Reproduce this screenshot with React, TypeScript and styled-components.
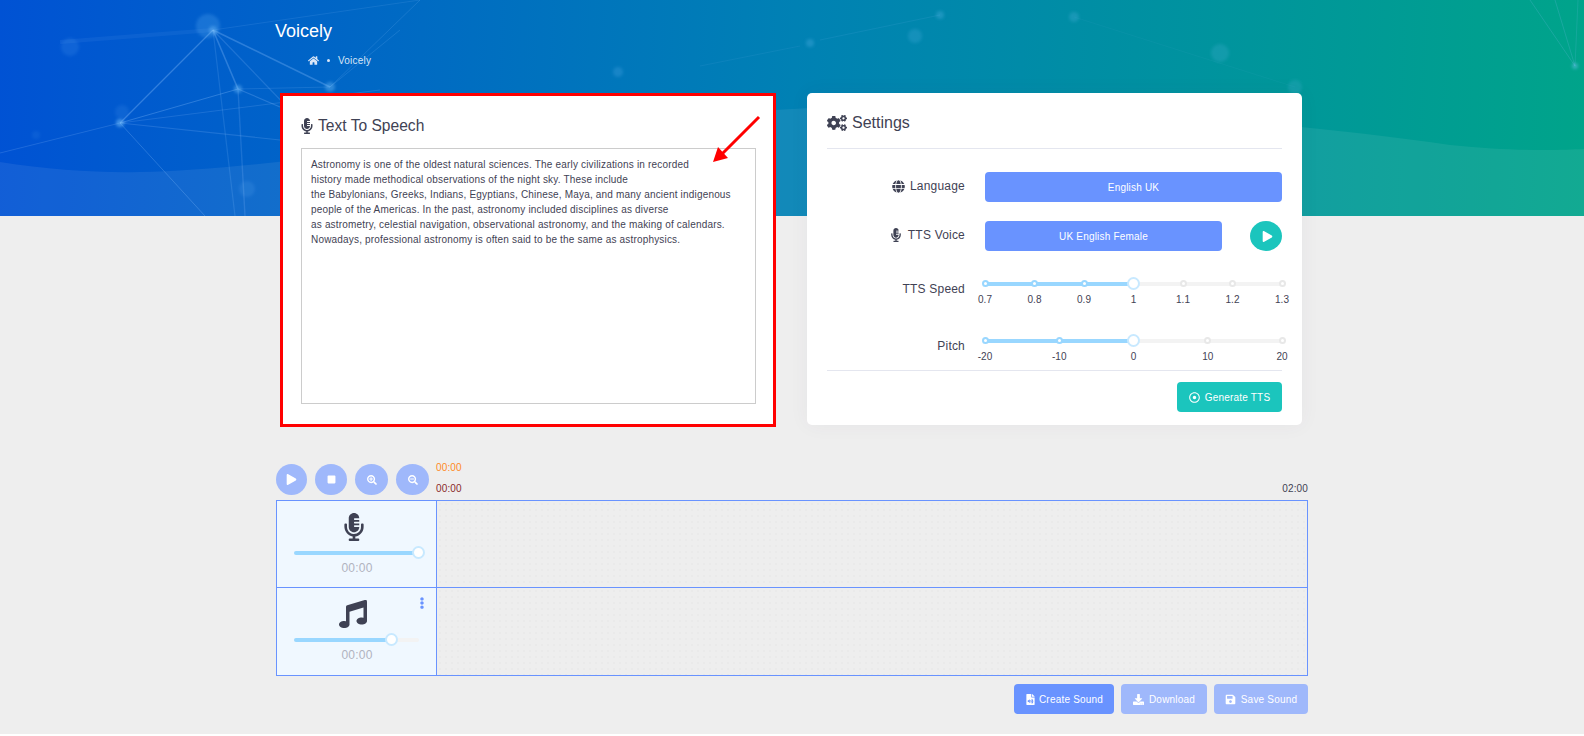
import React from "react";
import styled, { createGlobalStyle } from "styled-components";
import {
  FaMicrophoneAlt, FaCogs, FaGlobe, FaPlay, FaStop, FaSearchPlus, FaSearchMinus,
  FaMusic, FaEllipsisV, FaFileAudio, FaDownload, FaSave, FaHome, FaRegDotCircle,
} from "react-icons/fa";

const Global = createGlobalStyle`
  html, body { margin: 0; padding: 0; background: #fff; }
  body { font-family: "Liberation Sans", Arial, sans-serif; color: #3f4254; letter-spacing: .2px; overflow: hidden; }
  * { box-sizing: border-box; }
`;

const Page = styled.div`
  height: 734px;
  background: #eeeeee;
  position: relative;
  overflow: hidden;
`;
const Hero = styled.header`
  position: relative;
  height: 216px;
  padding: 21px 0 0 275px;
  background: linear-gradient(92deg, #0052d4 0%, #0081b4 50%, #00a48a 100%);
  color: #fff;
  overflow: hidden;
`;
const HeroArt = styled.svg`
  position: absolute;
  inset: 0;
  width: 100%;
  height: 100%;
`;
const HeroTitle = styled.h1`
  position: relative;
  margin: 0;
  font-size: 18px;
  line-height: 20px;
  font-weight: 400;
  letter-spacing: 0;
`;
const Crumbs = styled.div`
  position: relative;
  display: flex;
  align-items: center;
  margin: 11px 0 0 33px;
  height: 16px;
  font-size: 10px;
  color: #d9e6f7;
`;
const CrumbDot = styled.span`
  width: 3px;
  height: 3px;
  margin: 0 8px 0 8px;
  background: #d9e6f7;
  border-radius: 50%;
`;
const Main = styled.main`
  position: relative;
  margin-top: -123px;
  padding-left: 276px;
  width: 1308px;
`;
const Cards = styled.section`
  display: flex;
  align-items: flex-start;
  gap: 31px;
  margin-left: 4px;
`;
const TtsCard = styled.div`
  position: relative;
  width: 496px;
  height: 334px;
  padding: 17px 17px 20px 18px;
  background: #fff;
  border: 3px solid #ff0000;
`;
const CardTitle = styled.h2`
  display: flex;
  align-items: center;
  gap: 4px;
  margin: 0;
  height: 25px;
  font-size: 15.6px;
  font-weight: 400;
  letter-spacing: 0;
  color: #3f4254;
`;
const TitleMic = styled(FaMicrophoneAlt)`
  margin-left: -2px;
  margin-right: -1px;
`;
const TextBox = styled.div`
  margin-top: 10px;
  height: 256px;
  padding: 8px 9px;
  border: 1px solid #cccccc;
  font-size: 10px;
  line-height: 15px;
  letter-spacing: .18px;
  color: #3f4254;
`;
const Arrow = styled.svg`
  position: absolute;
  left: 429px;
  top: 18px;
`;
const SettingsCard = styled.div`
  width: 495px;
  height: 332px;
  padding: 18px 20px 0;
  background: #fff;
  border-radius: 5px;
  box-shadow: 0 0 20px rgba(82, 63, 105, .05);
`;
const SettingsHead = styled.div`
  height: 38px;
  border-bottom: 1px solid #e4e6ef;
`;
const SettingTitle = styled(CardTitle)`
  gap: 5px;
  height: 24px;
  font-size: 16px;
`;
const Row = styled.div<{ $h: number; $mt: number }>`
  display: grid;
  grid-template-columns: 138px 1fr;
  column-gap: 20px;
  height: ${(p) => p.$h}px;
  margin-top: ${(p) => p.$mt}px;
`;
const RowLabel = styled.div<{ $pt: number }>`
  display: flex;
  justify-content: flex-end;
  align-items: center;
  gap: 5px;
  height: 14px;
  margin-top: ${(p) => p.$pt}px;
  font-size: 12px;
  color: #3f4254;
`;
const SelectRow = styled.div`
  display: flex;
  justify-content: space-between;
`;
const Select = styled.div<{ $w: number }>`
  display: flex;
  align-items: center;
  justify-content: center;
  width: ${(p) => p.$w}px;
  height: 30px;
  background: #6993ff;
  border-radius: 4px;
  color: #fff;
  font-size: 10px;
`;
const RoundPlay = styled.div`
  display: flex;
  align-items: center;
  justify-content: center;
  width: 32px;
  height: 30px;
  padding-left: 2px;
  border-radius: 50%;
  background: #1bc5bd;
  color: #fff;
  font-size: 11px;
`;
const Slider = styled.div<{ $w: number }>`
  position: relative;
  width: ${(p) => p.$w}px;
  height: 4px;
  background: #f3f3f3;
  border-radius: 2px;
`;
const SliderFill = styled.div`
  position: absolute;
  left: 0;
  top: 0;
  height: 4px;
  background: #99d7ff;
  border-radius: 2px;
`;
const Dot = styled.span<{ $on: boolean }>`
  position: absolute;
  top: -2px;
  width: 7px;
  height: 7px;
  margin-left: -3.5px;
  background: #fff;
  border-radius: 50%;
  border: 2px solid ${(p) => (p.$on ? "#99d7ff" : "#e8e8e8")};
`;
const Knob = styled.span`
  position: absolute;
  top: -5px;
  width: 13px;
  height: 13px;
  margin-left: -7px;
  background: #fff;
  border-radius: 50%;
  border: 2px solid #c8e9ff;
`;
const Mark = styled.span`
  position: absolute;
  top: 12px;
  transform: translateX(-50%);
  font-size: 10px;
  line-height: 12px;
  color: #3f4254;
  letter-spacing: 0;
  white-space: nowrap;
`;
const Foot = styled.div`
  display: flex;
  justify-content: flex-end;
  margin-top: 1px;
  padding-top: 11px;
  border-top: 1px solid #e4e6ef;
`;
const Btn = styled.div<{ $bg: string; $w: number }>`
  display: flex;
  align-items: center;
  justify-content: center;
  gap: 5px;
  width: ${(p) => p.$w}px;
  height: 30px;
  border-radius: 4px;
  background: ${(p) => p.$bg};
  color: #fff;
  font-size: 10px;
`;
const FileIcon = styled(FaFileAudio)`
  margin-right: -2px;
`;
const Timeline = styled.section`
  margin-top: 37px;
`;
const Controls = styled.div`
  display: flex;
  gap: 8px;
  height: 36px;
`;
const Circle = styled.div<{ $w: number; $fs: number }>`
  display: flex;
  align-items: center;
  justify-content: center;
  width: ${(p) => p.$w}px;
  height: 31px;
  border-radius: 50%;
  background: #9fb8fb;
  color: #fff;
  font-size: ${(p) => p.$fs}px;
`;
const Times = styled.div`
  flex: 1;
  margin-left: -1px;
  padding-top: 1px;
  font-size: 10px;
  letter-spacing: .15px;
`;
const Now = styled.div`
  height: 21px;
  line-height: 6px;
  color: #ff8a1f;
`;
const RulerRow = styled.div`
  display: flex;
  justify-content: space-between;
  line-height: 6px;
  color: #8a2a2a;
`;
const RulerEnd = styled.span`
  color: #3f4254;
`;
const Grid = styled.div`
  width: 1032px;
  border: 1px solid #6993ff;
`;
const Track = styled.div<{ $h: number; $top?: boolean }>`
  display: flex;
  height: ${(p) => p.$h}px;
  ${(p) => (p.$top ? "border-top: 1px solid #6993ff;" : "")}
`;
const TrackHead = styled.div`
  position: relative;
  width: 160px;
  border-right: 1px solid #6993ff;
  background: #f0f8ff;
  display: flex;
  flex-direction: column;
  align-items: flex-start;
  padding: 12px 0 0 17px;
`;
const TrackIcon = styled.div<{ $shift: number }>`
  width: 124px;
  height: 28px;
  margin-left: ${(p) => p.$shift}px;
  display: flex;
  justify-content: center;
  color: #3f4254;
  font-size: 28px;
  line-height: 0;
`;
const TrackSliderWrap = styled.div`
  margin-top: 10px;
`;
const TrackTime = styled.div`
  width: 126px;
  margin-top: 6px;
  text-align: center;
  font-size: 12px;
  line-height: 14px;
  color: #b1b3c0;
`;
const Kebab = styled.span`
  position: absolute;
  right: 8px;
  top: 9px;
  color: #6993ff;
  font-size: 12px;
  line-height: 0;
`;
const TrackBody = styled.div`
  flex: 1;
  background-color: #eeeeee;
  background-image: radial-gradient(#eaeaea 1px, transparent 1px);
  background-size: 6px 6px;
`;
const Actions = styled.div`
  display: flex;
  justify-content: flex-end;
  gap: 7px;
  width: 1032px;
  margin-top: 8px;
`;

const TEXT = [
  "Astronomy is one of the oldest natural sciences. The early civilizations in recorded",
  "history made methodical observations of the night sky. These include",
  "the Babylonians, Greeks, Indians, Egyptians, Chinese, Maya, and many ancient indigenous",
  "people of the Americas. In the past, astronomy included disciplines as diverse",
  "as astrometry, celestial navigation, observational astronomy, and the making of calendars.",
  "Nowadays, professional astronomy is often said to be the same as astrophysics.",
];

const nodes: [number, number, number, number][] = [
  [70, 47, 9, .12], [208, 26, 12, .2], [213, 30, 4, .35], [238, 89, 4, .4], [120, 123, 4, .5], [330, 87, 5, .35],
  [36, 135, 4, .08], [122, 112, 7, .1], [247, 189, 8, .12], [618, 72, 5, .18], [810, 43, 4, .22], [915, 36, 7, .16],
  [940, 15, 4, .22], [1074, 17, 5, .18], [1220, 53, 9, .14], [1295, 87, 7, .14], [1575, 66, 3, .4],
];
const lines: [number, number, number, number, number, number][] = [
  [120, 123, 0, 153, 1, .2], [120, 123, 213, 30, 1.2, .34], [120, 123, 238, 89, 1, .3], [120, 123, 380, 90, 1, .18],
  [120, 123, 280, 140, 1.2, .2], [120, 123, 205, 216, 1, .26], [213, 30, 238, 89, 1.6, .3], [213, 30, 330, 87, 1.6, .3],
  [213, 30, 235, 216, 1.2, .16], [213, 30, 420, 0, .8, .16], [213, 30, 290, 110, 1.2, .2], [238, 89, 245, 216, 1.4, .18],
  [238, 89, 330, 87, .8, .2], [238, 89, 280, 107, 1.2, .25], [330, 87, 400, 30, 1, .16], [60, 42, 213, 30, 4, .08],
  [420, 0, 330, 87, 1, .16], [700, 66, 800, 46, .7, .12], [820, 40, 940, 15, .7, .14], [1074, 17, 1295, 87, 1, .05],
  [1575, 66, 1530, 0, 1, .18], [1575, 66, 1555, 0, 1, .18], [1575, 66, 1578, 0, 1, .14],
];

const Network = () => (
  <HeroArt viewBox="0 0 1584 216" preserveAspectRatio="none">
    <defs>
      <filter id="soft" x="-50%" y="-50%" width="200%" height="200%">
        <feGaussianBlur stdDeviation="1.5" />
      </filter>
    </defs>
    {lines.map(([a, b, c, d, w, o], i) => (
      <line key={i} x1={a} y1={b} x2={c} y2={d} stroke="#8fc4ff" strokeOpacity={o} strokeWidth={w} />
    ))}
    {nodes.map(([x, y, r, o], i) => (
      <circle key={i} cx={x} cy={y} r={r} fill="#7dc8ff" fillOpacity={o} filter="url(#soft)" />
    ))}
    <path
      d="M0 162 C50 170 100 173 140 172 C300 170 600 110 900 105 C1100 105 1300 124 1450 145 C1520 152 1560 150 1584 149 V216 H0Z"
      fill="#ffffff"
      fillOpacity={0.07}
    />
  </HeroArt>
);

type SliderProps = { width: number; marks: string[]; at: number };
const MarkedSlider = ({ width, marks, at }: SliderProps) => (
  <Slider $w={width}>
    <SliderFill style={{ width: `${at * 100}%` }} />
    {marks.map((m, i) => {
      const left = (i / (marks.length - 1)) * 100;
      return (
        <React.Fragment key={m}>
          {left / 100 !== at && <Dot $on={left / 100 < at} style={{ left: `${left}%` }} />}
          <Mark style={{ left: `${left}%` }}>{m}</Mark>
        </React.Fragment>
      );
    })}
    <Knob style={{ left: `${at * 100}%` }} />
  </Slider>
);

const VolumeSlider = ({ at }: { at: number }) => (
  <Slider $w={125}>
    <SliderFill style={{ width: `${at * 100}%` }} />
    <Knob style={{ left: `${at * 100}%` }} />
  </Slider>
);

export default function App() {
  return (
    <Page>
      <Global />
      <Hero>
        <Network />
        <HeroTitle>Voicely</HeroTitle>
        <Crumbs>
          <FaHome size={11} />
          <CrumbDot />
          Voicely
        </Crumbs>
      </Hero>
      <Main>
        <Cards>
          <TtsCard>
            <CardTitle>
              <TitleMic size={16} />
              Text To Speech
            </CardTitle>
            <TextBox>
              {TEXT.map((t) => (
                <div key={t}>{t}</div>
              ))}
            </TextBox>
            <Arrow width="50" height="50" viewBox="0 0 50 50">
              <path d="M47 3 L10 40" stroke="#f00" strokeWidth="3" fill="none" />
              <path d="M1 48 L16 44 L6 33 Z" fill="#f00" />
            </Arrow>
          </TtsCard>
          <SettingsCard>
            <SettingsHead>
              <SettingTitle>
                <FaCogs size={20} />
                Settings
              </SettingTitle>
            </SettingsHead>
            <Row $h={30} $mt={23}>
              <RowLabel $pt={7}>
                <FaGlobe size={13} />
                Language
              </RowLabel>
              <Select $w={297}>English UK</Select>
            </Row>
            <Row $h={30} $mt={19}>
              <RowLabel $pt={7}>
                <FaMicrophoneAlt size={14} />
                TTS Voice
              </RowLabel>
              <SelectRow>
                <Select $w={237}>UK English Female</Select>
                <RoundPlay>
                  <FaPlay />
                </RoundPlay>
              </SelectRow>
            </Row>
            <Row $h={30} $mt={31}>
              <RowLabel $pt={0}>TTS Speed</RowLabel>
              <MarkedSlider width={297} at={0.5} marks={["0.7", "0.8", "0.9", "1", "1.1", "1.2", "1.3"]} />
            </Row>
            <Row $h={30} $mt={27}>
              <RowLabel $pt={0}>Pitch</RowLabel>
              <MarkedSlider width={297} at={0.5} marks={["-20", "-10", "0", "10", "20"]} />
            </Row>
            <Foot>
              <Btn $bg="#1bc5bd" $w={105}>
                <FaRegDotCircle size={11} />
                Generate TTS
              </Btn>
            </Foot>
          </SettingsCard>
        </Cards>
        <Timeline>
          <Controls>
            <Circle $w={31} $fs={11}>
              <FaPlay />
            </Circle>
            <Circle $w={32} $fs={9}>
              <FaStop />
            </Circle>
            <Circle $w={33} $fs={10}>
              <FaSearchPlus />
            </Circle>
            <Circle $w={33} $fs={10}>
              <FaSearchMinus />
            </Circle>
            <Times>
              <Now>00:00</Now>
              <RulerRow>
                <span>00:00</span>
                <RulerEnd>02:00</RulerEnd>
              </RulerRow>
            </Times>
          </Controls>
          <Grid>
            <Track $h={86}>
              <TrackHead>
                <TrackIcon $shift={-2}>
                  <FaMicrophoneAlt />
                </TrackIcon>
                <TrackSliderWrap>
                  <VolumeSlider at={1} />
                </TrackSliderWrap>
                <TrackTime>00:00</TrackTime>
              </TrackHead>
              <TrackBody />
            </Track>
            <Track $h={88} $top>
              <TrackHead>
                <Kebab>
                  <FaEllipsisV />
                </Kebab>
                <TrackIcon $shift={-3}>
                  <FaMusic />
                </TrackIcon>
                <TrackSliderWrap>
                  <VolumeSlider at={0.78} />
                </TrackSliderWrap>
                <TrackTime>00:00</TrackTime>
              </TrackHead>
              <TrackBody />
            </Track>
          </Grid>
          <Actions>
            <Btn $bg="#6993ff" $w={100}>
              <FileIcon size={11} />
              Create Sound
            </Btn>
            <Btn $bg="#9fb8fb" $w={86}>
              <FaDownload size={11} />
              Download
            </Btn>
            <Btn $bg="#9fb8fb" $w={94}>
              <FaSave size={11} />
              Save Sound
            </Btn>
          </Actions>
        </Timeline>
      </Main>
    </Page>
  );
}
